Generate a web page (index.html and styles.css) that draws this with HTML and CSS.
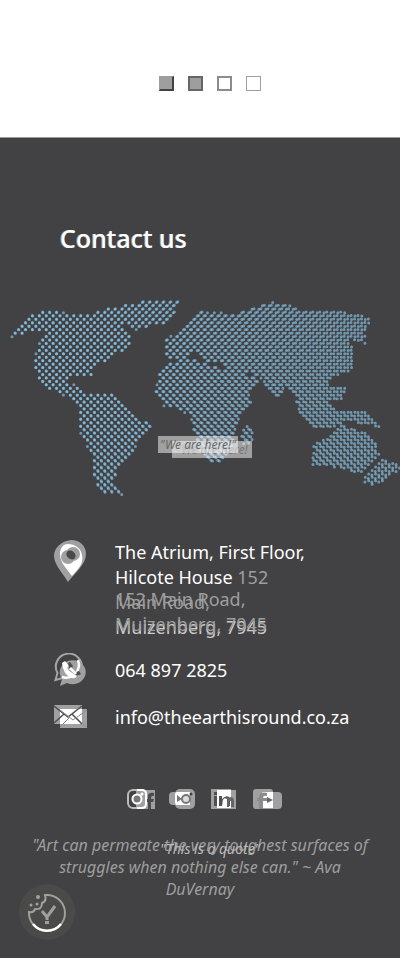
FILE: index.html
```
<!DOCTYPE html>
<html lang="en">
<head>
<meta charset="utf-8">
<meta name="viewport" content="width=device-width, initial-scale=1">
<title>Contact us</title>
<link rel="stylesheet" href="styles.css">
</head>
<body>
<section class="slider" aria-label="Slides">
  <button class="dot dot-current" aria-label="Slide 1"></button>
  <button class="dot dot-filled" aria-label="Slide 2"></button>
  <button class="dot dot-double" aria-label="Slide 3"></button>
  <button class="dot dot-open" aria-label="Slide 4"></button>
</section>
<footer class="footer">
  <h2 class="title stack"><span class="faint">Contact us</span><span class="title-front">Contact us</span></h2>
  <div class="map">
    <svg class="map-dots" viewBox="0 290 400 220" aria-hidden="true"></svg>
    <p class="here here-back">"We are here!</p>
    <p class="here here-front">"We are here!"</p>
  </div>
  <address class="contacts">
    <svg class="icon icon-pin" viewBox="0 0 34 44" aria-hidden="true">
      <path fill="#a0a0a0" d="M14 42C9 33 0 25 0 16C0 8 7 1 17 0c9 0 15 6 15 14 0 10-10 18-18 28z"/>
      <path fill="#fff" d="M18 36l6-7c4-5 5-9 4-14C27 8 21 4 14 4 9 4 6 8 6 14c0 9 7 15 12 22z"/>
      <circle cx="14" cy="17" r="7" fill="#a0a0a0"/>
      <circle cx="19" cy="14" r="7" fill="#a0a0a0"/>
      <ellipse cx="17" cy="15" rx="5" ry="4" transform="rotate(40 17 15)" fill="#4a4a4b"/>
    </svg>
    <div class="lines">
      <div>The Atrium, First Floor,</div>
      <div>Hilcote House <span class="dim">152</span></div>
      <div class="stack"><span class="dim">Main Road,</span><span class="dim raised">152 Main Road,</span></div>
      <div class="stack"><span class="soft">Muizenberg, 7945</span><span class="dim raised">Muizenberg, 7945</span></div>
    </div>
    <svg class="icon" viewBox="0 0 34 34" aria-hidden="true">
      <path d="M1.500 27l2-7a13 13 0 1 1 5 5z" fill="none" stroke="#a5a5a5" stroke-width="2"/>
      <path d="M6 33l2-7a13 12 0 1 1 5 4z" fill="#a0a0a0"/>
      <path d="M24 7a13 13 0 0 1-16 17" fill="none" stroke="#fff" stroke-width="2.500"/>
      <path d="M8 10l3-2 4 5-2 2q3 5 7 5l3 3q-2 3-5 2-9-3-10-15z" fill="#fff"/>
      <path d="M14 10l2-1 3 4-1 2 4 4 3-1 2 3q-3 2-6 1-6-4-7-12z" fill="#505051"/>
      <path d="M16 15l6 6" stroke="#fff" stroke-width="3"/>
    </svg>
    <a class="line" href="tel:0648972825">064 897 2825</a>
    <svg class="icon icon-mail" viewBox="0 0 34 24" aria-hidden="true">
      <path d="M0 0h28v19H0zM6 4h27v19H6z" fill="#a0a0a0"/>
      <path d="M6 4h22v15H6z" fill="#fff"/>
      <path d="M0 1l14 11L28 1M0 18l10-9M18 9l10 10" fill="none" stroke="#505051" stroke-width="1.500"/>
      <path d="M6 5l13 10L33 5M6 22l9-9M23 13l9 9" fill="none" stroke="#8c8c8c"/>
    </svg>
    <a class="line" href="mailto:info@theearthisround.co.za">info@theearthisround.co.za</a>
  </address>
  <nav class="social" aria-label="Social media">
    <a href="#" aria-label="Instagram and Facebook"><svg viewBox="0 0 30 22">
      <path d="M10 2h19v19H10z" fill="#a0a0a0"/>
      <path d="M22 21v-7h-2v-3h2V8q0-4 6-3v3q-3-1-3 3h3l-1 3h-2v7z" fill="#4b4b4b"/>
      <rect x="2" y="2" width="18" height="18" rx="5" fill="none" stroke="#bbb" stroke-width="2"/>
      <path d="M11 2h5q4 0 4 4v10q0 4-4 4h-5" fill="none" stroke="#fff" stroke-width="2"/>
      <circle cx="11" cy="11" r="4.500" fill="#777" stroke="#fff" stroke-width="2"/><circle cx="16" cy="6" r="1.500" fill="#fff"/>
    </svg></a>
    <a href="#" aria-label="YouTube and Instagram"><svg viewBox="0 0 30 22">
      <rect x="1" y="4" width="21" height="13" rx="4" fill="#a0a0a0"/>
      <rect x="7" y="1" width="20" height="20" rx="5" fill="#a0a0a0"/>
      <path d="M9 4h13v13H9q-2 0-2-3V7q0-3 2-3z" fill="#fff"/>
      <path d="M9 7l5 4-5 3z" fill="#777"/><circle cx="18" cy="11" r="4" fill="#ddd" stroke="#777" stroke-width="2"/><circle cx="23" cy="6" r="1.500" fill="#424143"/>
    </svg></a>
    <a href="#" aria-label="LinkedIn"><svg viewBox="0 0 30 22">
      <path d="M1 1h20v20H1zM7 2h19v19H7z" fill="#a0a0a0"/><path d="M7 2h14v18H7z" fill="#fff"/>
      <path d="M4 8h3v10H4zM4 4h3v3H4zM9 8h3v10H9zM12 11q5-5 8-1v8h-3v-7q-3-2-4 1v6" fill="#505051"/>
      <path d="M17 10h2q4-3 5 2v7h-3v-6h-2v6h-2z" fill="#666"/>
    </svg></a>
    <a href="#" aria-label="Facebook and YouTube"><svg viewBox="0 0 30 22">
      <rect x="1" y="1" width="20" height="20" rx="3" fill="#a0a0a0"/><rect x="9" y="4" width="21" height="17" rx="4" fill="#a0a0a0"/>
      <path d="M10 4h11v16H10z" fill="#fff"/><path d="M7 21v-8H5v-3h2q0-7 8-5v3q-4-1-4 2h4v3h-4v8z" fill="#8c8c8c"/><path d="M15 9l6 3-6 3z" fill="#666"/>
    </svg></a>
  </nav>
  <div class="quotes">
    <blockquote class="quote">"Art can permeate the very toughest surfaces of struggles when nothing else can." ~ Ava DuVernay</blockquote>
    <p class="quote-short">"This is a quote"</p>
  </div>
</footer>
<button class="cookie" aria-label="Cookie settings">
  <svg viewBox="0 0 56 56" aria-hidden="true">
    <path d="M26 11a18 18 0 1 1-16 17q5 1 6-3 7 1 7-6 5-2 3-8z" fill="none" stroke="#a0a0a0" stroke-width="2"/>
    <path d="M14 40a18 18 0 0 0 28 0" fill="none" stroke="#fff" stroke-width="2.500"/>
    <path d="M23 27l5 6 8-11M28 33v3" fill="none" stroke="#a0a0a0" stroke-width="3"/>
    <path d="M26 37h4v3h-4z" fill="#a0a0a0"/>
    <g fill="#a0a0a0"><circle cx="19" cy="13" r="2"/><circle cx="18" cy="20" r="1.500"/><circle cx="12" cy="21" r="1.500"/></g>
  </svg>
</button>
<script src="map.js"></script>
</body>
</html>
```
FILE: styles.css
```
* { box-sizing: border-box; }
body { margin: 0; background: #424143; color: #fff; font-family: "Noto Sans", "Open Sans", sans-serif; font-size: 18px; line-height: 25px; }
h2, p, blockquote { margin: 0; }
.slider { display: flex; justify-content: center; gap: 14px; padding: 76px 0 46px 20px; background: #fff; }
.dot { width: 15px; height: 15px; padding: 0; border: 1px solid #9e9e9e; background: #9e9e9e; }
.dot-current { border-right: 2px solid #424143; border-bottom: 2px solid #424143; }
.dot-filled { border: 2px solid #666; }
.dot-double { border: 2px solid #8c8c8c; background: #fff; }
.dot-open { background: #fff; }
.footer { border-top: 1px solid #999; }
.stack { display: grid; }
.stack > * { grid-area: 1 / 1; }
.title { padding: 83px 59px 0; font-size: 25px; line-height: 34px; font-weight: 500; }
.faint { color: #9e9e9e; }
.title-front { padding-left: 1px; }
.map { position: relative; margin-top: 35px; }
.map-dots { display: block; width: 100%; fill: #8fd2f8; }
.here { position: absolute; width: 80px; height: 17px; font-size: 12px; line-height: 17px; font-style: italic; text-align: center; white-space: nowrap; background: rgba(255,255,255,.5); }
.here-front { left: 158px; top: 146px; color: #666; }
.here-back { left: 172px; top: 151px; color: #777; }
.contacts { display: grid; grid-template-columns: 34px 1fr; align-items: center; column-gap: 27px; row-gap: 13px; padding: 30px 20px 0 54px; font-style: normal; }
.icon { width: 34px; display: block; }
.icon-pin { align-self: start; }
.dim { color: #9e9e9e; }
.soft { color: #ccc; }
.raised { margin-top: -3px; }
.line { color: #fff; text-decoration: none; line-height: 34px; }
.social { display: flex; justify-content: center; gap: 12px; padding: 54px 0 0 8px; }
.social svg { display: block; width: 30px; height: 22px; }
.quotes { position: relative; margin-top: 24px; }
.quote { padding: 0 26px; color: #9e9e9e; font-size: 16px; line-height: 22px; font-style: italic; text-align: center; }
.quote-short { position: absolute; left: 0; right: 0; top: 4px; padding-left: 20px; text-align: center; font-size: 14px; line-height: 22px; font-style: italic; color: #bbb; }
.cookie { position: fixed; left: 19px; bottom: 18px; width: 56px; height: 56px; padding: 0; border: 0; border-radius: 50%; background: #4a4a48; }
.cookie svg { display: block; }
```
FILE: map.js
```
// Land outlines; each is filled with two overlapping dot lattices.
const lands = [
  [11,337,30,316,48,310,68,313,90,313,115,307,127,304,131,316,123,325,132,336,131,346,118,353,101,364,93,369,94,379,82,376,67,379,72,384,85,390,85,397,78,407,62,394,48,388,39,380,35,365,36,350,41,340,47,334,35,330,20,336],
  [129,306,143,300,183,299,173,315,165,324,150,326,138,331,127,323],
  [81,395,114,395,126,407,138,417,151,426,141,438,133,452,119,468,113,480,119,490,126,495,104,493,94,480,92,455,81,435,78,415],
  [167,362,192,359,215,367,235,371,260,380,247,392,254,402,241,415,236,430,233,445,223,460,212,464,201,455,194,432,191,416,180,410,164,406,155,392,159,374],
  [246,426,254,429,253,441,244,447,239,436],
  [166,340,185,325,200,312,235,313,258,307,270,302,290,304,300,310,335,311,360,315,373,320,365,330,365,344,352,340,348,337,355,355,351,371,340,373,333,378,326,387,345,386,344,399,328,400,318,399,314,407,299,408,294,393,285,387,277,399,267,391,262,379,248,373,230,371,222,361,205,363,195,353,185,359,166,358],
  [294,401,310,401,330,401,335,411,365,411,380,427,365,425,345,421,330,428,315,427,302,416],
  [341,425,352,428,365,433,375,443,380,455,367,468,358,474,345,470,330,466,311,466,314,445,330,435],
  [383,459,402,466,386,481,372,486,361,482,369,471]
];
function inside(p, x, y) {
  let hit = false;
  for (let i = 0, j = p.length - 2; i < p.length; j = i, i += 2) {
    if ((p[i + 1] > y) !== (p[j + 1] > y) && x < (p[j] - p[i]) * (y - p[i + 1]) / (p[j + 1] - p[i + 1]) + p[i]) hit = !hit;
  }
  return hit;
}
function lattice(step, x0, y0) {
  let d = "";
  for (let r = -40; r < 60; r++) {
    for (let c = -20; c < 70; c++) {
      const x = x0 + c * step + (r & 1 ? step / 2 : 0), y = y0 + r * step / 2;
      if (lands.some(p => inside(p, x, y))) d += `M${(x - 1.5).toFixed(2)} ${y.toFixed(2)}a1.5 1.5 0 1 0 3 0a1.5 1.5 0 1 0-3 0z`;
    }
  }
  return `<path opacity=".6" d="${d}"/>`;
}
document.querySelector(".map-dots").innerHTML = lattice(6.93, 60, 371) + lattice(6.86, 60, 371);
```
